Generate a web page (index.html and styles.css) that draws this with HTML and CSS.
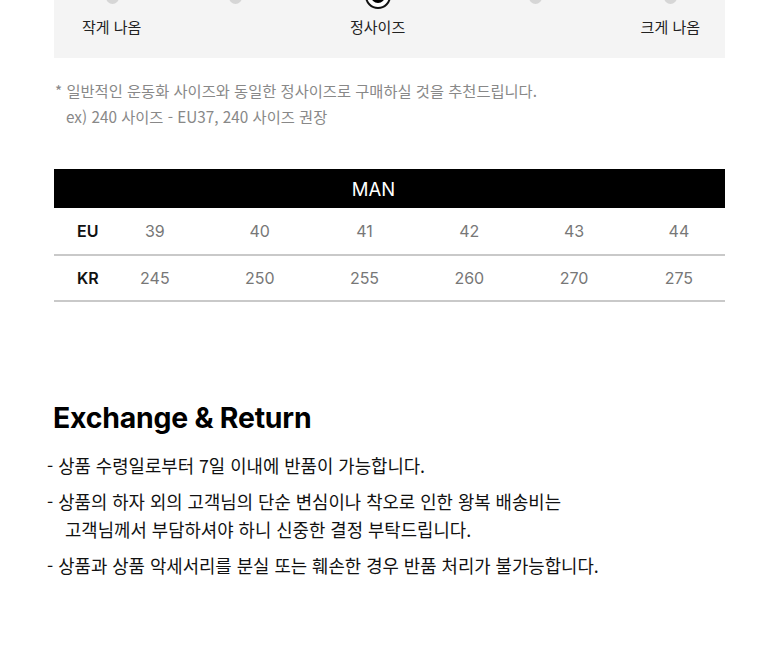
FILE: index.html
```html
<!DOCTYPE html>
<html lang="ko">
<head>
<meta charset="utf-8">
<link rel="stylesheet" href="styles.css">
</head>
<body>
<div class="page">
  <section class="fit-box">
    <div class="track">
      <span class="dot dot-1"></span>
      <span class="dot dot-2"></span>
      <span class="dot-selected"><span class="dot-inner"></span></span>
      <span class="dot dot-4"></span>
      <span class="dot dot-5"></span>
    </div>
    <div class="fit-labels">
      <span class="fit-left">작게 나옴</span>
      <span class="fit-mid">정사이즈</span>
      <span class="fit-right">크게 나옴</span>
    </div>
  </section>

  <p class="note">* 일반적인 운동화 사이즈와 동일한 정사이즈로 구매하실 것을 추천드립니다.<br><span class="note-ex">ex) 240 사이즈 - EU37, 240 사이즈 권장</span></p>

  <div class="size-table">
    <div class="table-head">MAN</div>
    <div class="table-row row-eu">
      <span class="row-label">EU</span>
      <span class="val">39</span><span class="val">40</span><span class="val">41</span><span class="val">42</span><span class="val">43</span><span class="val">44</span>
    </div>
    <div class="table-row row-kr">
      <span class="row-label">KR</span>
      <span class="val">245</span><span class="val">250</span><span class="val">255</span><span class="val">260</span><span class="val">270</span><span class="val">275</span>
    </div>
  </div>

  <h2 class="title">Exchange &amp; Return</h2>
  <ul class="policy">
    <li>- 상품 수령일로부터 7일 이내에 반품이 가능합니다.</li>
    <li>- 상품의 하자 외의 고객님의 단순 변심이나 착오로 인한 왕복 배송비는<br>고객님께서 부담하셔야 하니 신중한 결정 부탁드립니다.</li>
    <li>- 상품과 상품 악세서리를 분실 또는 훼손한 경우 반품 처리가 불가능합니다.</li>
  </ul>
</div>
</body>
</html>
```

FILE: styles.css
```css
* { box-sizing: border-box; }
html, body { margin: 0; padding: 0; background: #fff; }
body {
  font-family: "Noto Sans CJK KR", "Noto Sans", sans-serif;
  color: #111;
  overflow: hidden;
}
.page {
  width: 780px;
  padding-left: 54px;
  padding-right: 55px;
}
.fit-box {
  background: #f4f4f4;
  margin-top: -60px;
  height: 118px;
}
.track {
  position: relative;
  height: 77px;
}
.dot {
  position: absolute;
  top: 51px;
  width: 13px;
  height: 13px;
  border-radius: 50%;
  background: #d6d6d6;
}
.dot-1 { left: 52px; }
.dot-2 { left: 175px; }
.dot-4 { left: 475px; }
.dot-5 { left: 610px; }
.dot-selected {
  position: absolute;
  top: 43px;
  left: 311px;
  width: 26px;
  height: 26px;
  border-radius: 50%;
  background: #fff;
  border: 2px solid #111;
  display: flex;
  align-items: center;
  justify-content: center;
}
.dot-inner {
  width: 14px;
  height: 14px;
  border-radius: 50%;
  background: #000;
}
.fit-labels {
  display: grid;
  grid-template-columns: 268px auto 1fr;
  padding: 0 25px 0 28px;
  font-size: 15px;
  line-height: 20px;
  color: #222;
}
.fit-right { justify-self: end; }
.note {
  margin: 19px 0 0 1px;
  font-size: 15.3px;
  line-height: 26px;
  color: #888;
}
.note-ex { padding-left: 11px; }
.size-table {
  margin-top: 40px;
}
.table-head {
  background: #000;
  color: #fff;
  height: 39px;
  line-height: 40px;
  text-align: center;
  padding-right: 32px;
  font-family: "Inter", "Noto Sans", sans-serif;
  font-size: 18.5px;
}
.table-row {
  display: grid;
  grid-template-columns: 48.5px repeat(6, 104.8px);
  align-items: center;
  border-bottom: 2px solid #c9c9c9;
  font-family: "Inter", "Noto Sans", sans-serif;
  font-size: 16px;
}
.row-eu { height: 48px; }
.row-kr { height: 46px; }
.row-label {
  padding-left: 23px;
  font-weight: 600;
  color: #111;
}
.val {
  text-align: center;
  color: #777;
}
.title {
  margin: 98px 0 0 -1px;
  font-family: "Inter", "Noto Sans", sans-serif;
  font-weight: 700;
  font-size: 28.4px;
  line-height: 36px;
  letter-spacing: -0.2px;
  color: #000;
}
.policy {
  list-style: none;
  margin: 15px 0 0 -7px;
  padding: 0;
  font-size: 17.8px;
  line-height: 28px;
  color: #111;
}
.policy li {
  padding-left: 18px;
  text-indent: -18px;
  margin-bottom: 8px;
}
```
